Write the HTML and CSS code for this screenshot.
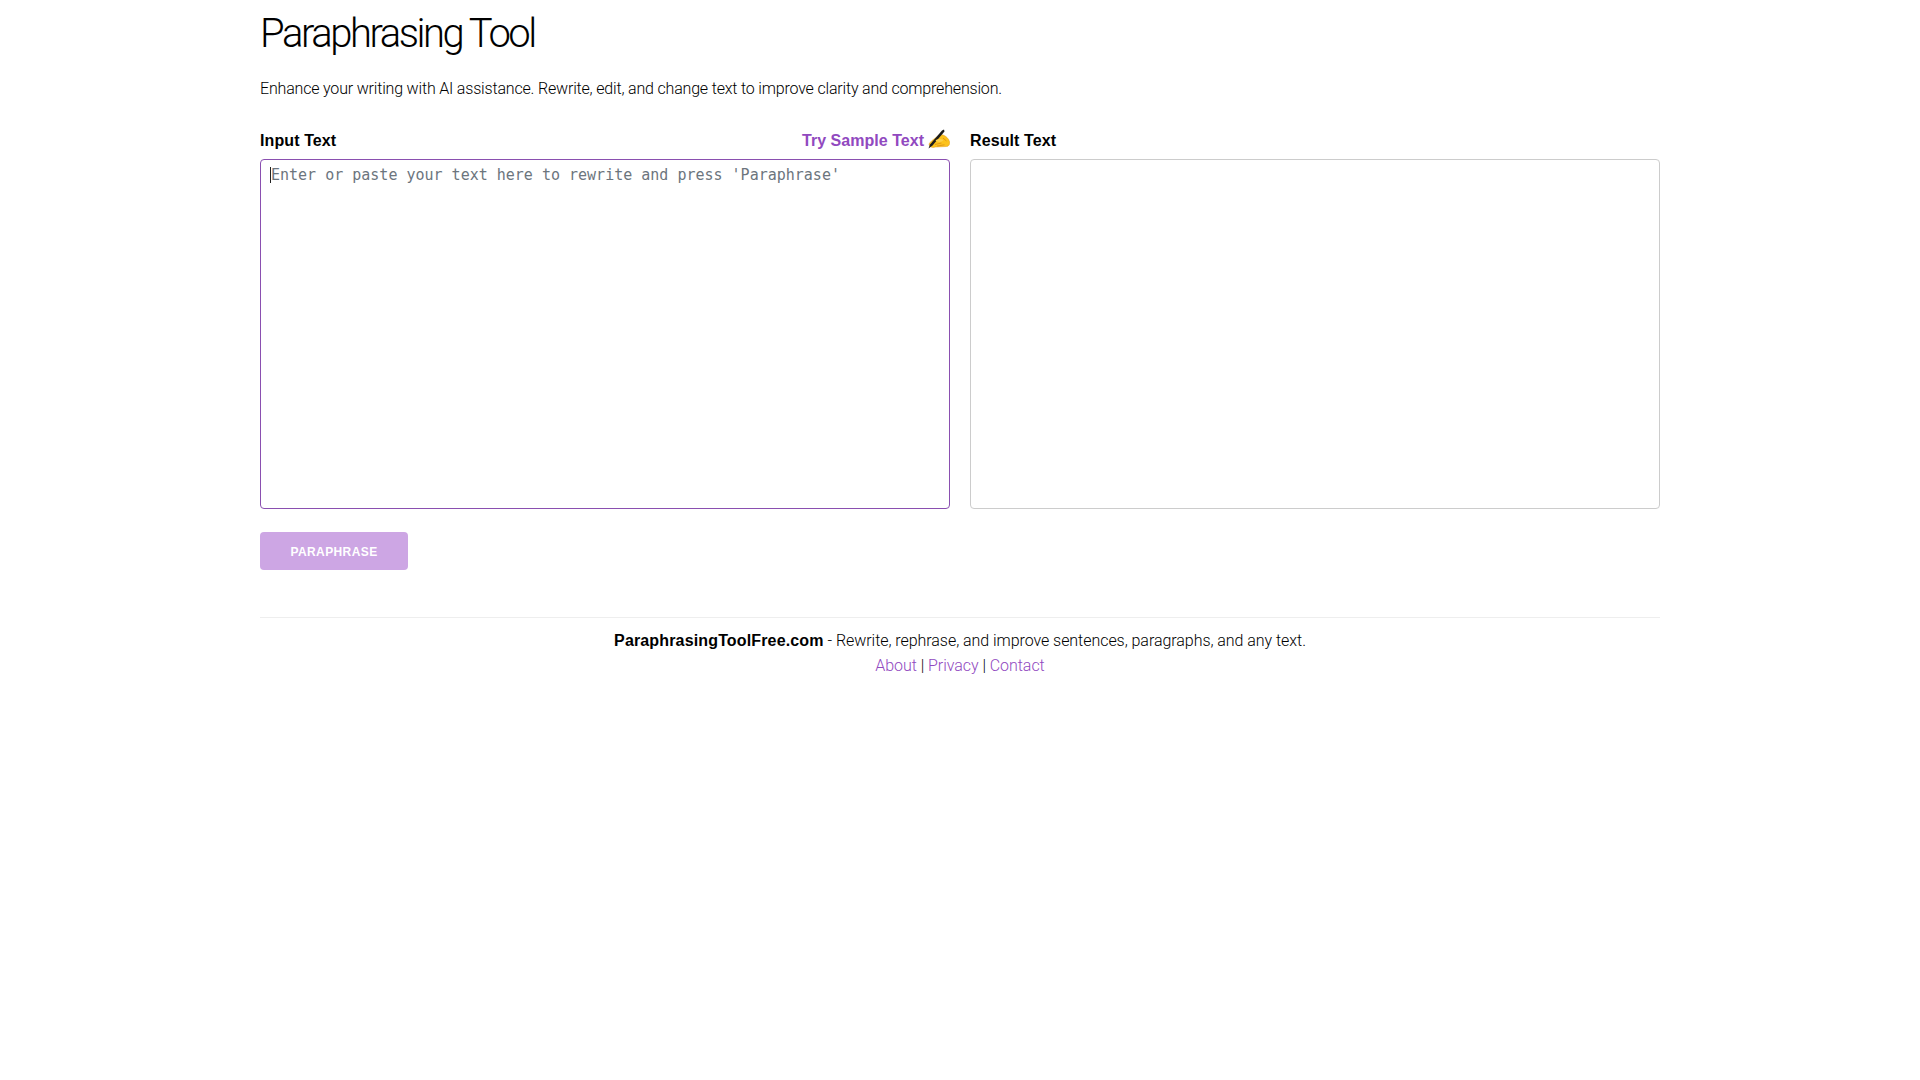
FILE: index.html
```html
<!DOCTYPE html>
<html lang="en">
<head>
    <meta charset="UTF-8">
    <meta name="viewport" content="width=device-width, initial-scale=1.0">
    <title>Paraphrasing Tool</title>
    <link rel="stylesheet" href="styles.css">
</head>
<body>
    <div class="container">
        <h1 class="title">Paraphrasing Tool</h1>
        <p class="lead">Enhance your writing with AI assistance. Rewrite, edit, and change text to improve clarity and comprehension.</p>

        <div class="columns">
            <div class="column">
                <div class="label-row">
                    <label class="label" for="input-text">Input Text</label>
                    <a class="sample" href="#">Try Sample Text
                        <svg class="hand" viewBox="0 0 22 20" width="22" height="20" aria-hidden="true">
                            <path d="M1 15 C2.5 12.5 5 10.5 7.5 9 C9.5 6.5 12.5 5 15 6 C18 7 20.5 9.5 21.5 12.5 C22 15 21 17.5 18.5 17.5 L7.5 18 C5 19 1.5 18.5 1 15 Z" fill="#fcc21b" stroke="#e29b1c" stroke-width="0.5"/>
                            <path d="M7 15.5 L13.5 14 M9 17 L16.5 15.8 M15 9 L18.5 12" stroke="#d98d16" stroke-width="0.8" fill="none"/>
                            <path d="M0.5 19.5 L2 15.5 L14 1.5 L16 0.5 L16.5 2.5 L4.5 16.5 Z" fill="#1c1c1c"/>
                            <path d="M7.5 11.5 C9.5 9.5 13 9.5 15.5 11 C14 13.2 10 13.7 7.5 11.5 Z" fill="#fdd04a"/>
                        </svg>
                    </a>
                </div>
                <div class="box-wrap">
                    <textarea id="input-text" class="box box-active" placeholder="Enter or paste your text here to rewrite and press 'Paraphrase'"></textarea>
                    <span class="caret"></span>
                </div>
            </div>
            <div class="column">
                <div class="label-row">
                    <label class="label" for="result-text">Result Text</label>
                </div>
                <textarea id="result-text" class="box" readonly></textarea>
            </div>
        </div>

        <button class="btn" disabled>PARAPHRASE</button>

        <footer class="footer">
            <p><strong>ParaphrasingToolFree.com</strong> - Rewrite, rephrase, and improve sentences, paragraphs, and any text.</p>
            <p><a href="#">About</a> | <a href="#">Privacy</a> | <a href="#">Contact</a></p>
        </footer>
    </div>
</body>
</html>
```

FILE: styles.css
```css
* {
    margin: 0;
    padding: 0;
    box-sizing: border-box;
}

body {
    font-family: "Roboto", "Liberation Sans", sans-serif;
    font-weight: 300;
    background: #fff;
    color: #000;
}

.container {
    width: 1400px;
    margin: 0 auto;
}

.title {
    font-size: 40px;
    font-weight: 300;
    line-height: 48px;
    letter-spacing: -2.45px;
    padding-top: 10px;
}

.lead {
    font-size: 16px;
    line-height: 24px;
    letter-spacing: -0.18px;
    margin-top: 19px;
}

.columns {
    display: flex;
    gap: 20px;
    margin-top: 28px;
}

.column {
    flex: 1;
}

.label-row {
    display: flex;
    justify-content: space-between;
    align-items: center;
    height: 24px;
    margin-bottom: 6px;
}

.label {
    font-family: "Liberation Sans", sans-serif;
    font-size: 16px;
    font-weight: 700;
    letter-spacing: 0.1px;
}

.sample {
    display: flex;
    align-items: center;
    gap: 4px;
    font-family: "Liberation Sans", sans-serif;
    font-size: 16px;
    font-weight: 700;
    letter-spacing: 0.03px;
    color: #9149bf;
    text-decoration: none;
}

.hand {
    margin-top: -4px;
}

.box-wrap {
    position: relative;
}

.caret {
    position: absolute;
    top: 8px;
    left: 10px;
    width: 1px;
    height: 16px;
    background: #222;
}

.box {
    display: block;
    width: 100%;
    height: 350px;
    padding: 6px 10px;
    border: 1px solid #ccc;
    border-radius: 4px;
    font-family: "DejaVu Sans Mono", monospace;
    font-size: 15px;
    line-height: 18px;
    resize: none;
    outline: none;
    color: #000;
    background: #fff;
}

.box::placeholder {
    color: #6c757d;
    opacity: 1;
}

.box-active {
    border-color: #8a4fb0;
}

.btn {
    display: block;
    width: 148px;
    height: 38px;
    margin-top: 23px;
    padding-top: 2px;
    border: none;
    border-radius: 4px;
    background: #cda6e4;
    color: #fff;
    font-family: "Liberation Sans", sans-serif;
    font-size: 12px;
    font-weight: 700;
    letter-spacing: 0.4px;
}

.footer {
    margin-top: 47px;
    padding-top: 10px;
    border-top: 1px solid #eee;
    text-align: center;
    font-size: 16px;
    line-height: 25px;
    letter-spacing: -0.05px;
}

.footer strong {
    font-family: "Liberation Sans", sans-serif;
    font-weight: 700;
    letter-spacing: 0.15px;
}

.footer a {
    color: #9149bf;
    text-decoration: none;
}
```
